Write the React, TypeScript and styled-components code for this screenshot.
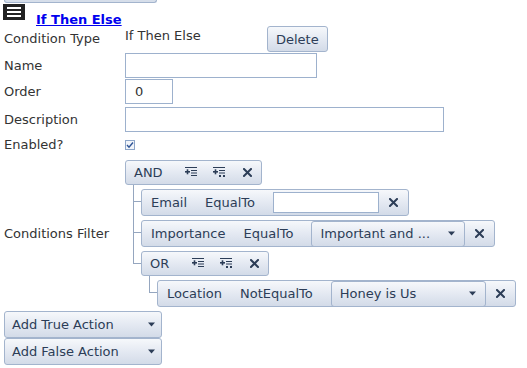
import React from 'react';
import styled, { createGlobalStyle } from 'styled-components';

const GlobalStyle = createGlobalStyle`
    html, body {
        margin: 0;
        padding: 0;
        background: #fff;
    }
    body {
        font-family: "DejaVu Sans", Verdana, sans-serif;
        font-size: 13px;
        color: #333;
    }
`;

const gradient = 'linear-gradient(to bottom, #f6f8fb 0%, #e4e9f2 50%, #d3dbe8 100%)';
const edge = '#a3b4cd';

const Page = styled.div`
    padding: 0 4px;
    width: 519px;
`;

const TopStub = styled.div`
    width: 153px;
    height: 3px;
    background: #d6deea;
    border: 1px solid ${edge};
    border-top: none;
    border-radius: 0 0 3px 3px;
    box-sizing: border-box;
`;

const Header = styled.div`
    display: flex;
    align-items: flex-start;
    height: 22px;
    margin-top: 1px;
    margin-left: -1px;
`;

const MenuButton = styled.div`
    width: 22px;
    height: 16px;
    background: #222;
    display: flex;
    flex-direction: column;
    justify-content: center;
    align-items: center;
    gap: 2px;
    span {
        display: block;
        width: 14px;
        height: 2px;
        background: #fff;
    }
`;

const TitleLink = styled.a`
    margin-left: 11px;
    margin-top: 8px;
    line-height: 16px;
    font-weight: bold;
    color: #0000ee;
    text-decoration: underline;
`;

const FieldRow = styled.div<{ $gap?: number; $height?: number }>`
    display: flex;
    align-items: center;
    margin-top: ${p => p.$gap ?? 0}px;
    min-height: ${p => p.$height ?? 0}px;
`;

const Label = styled.div`
    width: 121px;
    flex-shrink: 0;
    line-height: 16px;
`;

const Value = styled.div`
    align-self: flex-start;
    margin-top: 2px;
    width: 142px;
    line-height: 16px;
`;

const Button = styled.button`
    height: 26px;
    padding: 0 8px;
    font: inherit;
    color: #2c3d57;
    background: ${gradient};
    border: 1px solid ${edge};
    border-radius: 3px;
`;

const TextInput = styled.input<{ $width: number; $height?: number }>`
    box-sizing: border-box;
    width: ${p => p.$width}px;
    height: ${p => p.$height ?? 25}px;
    border: 1px solid #9db1cd;
    padding: 0 9px;
    font: inherit;
    color: #333;
    background: #fff;
    outline: none;
`;

const CheckBox = styled.span`
    display: inline-flex;
    width: 10px;
    height: 10px;
    box-sizing: border-box;
    border: 1px solid #8ea6c9;
    background: #f2f5fa;
    align-items: center;
    justify-content: center;
`;

const Tree = styled.div`
    display: flex;
    flex-direction: column;
    align-items: flex-start;
`;

const GroupBar = styled.div<{ $width: number }>`
    box-sizing: border-box;
    width: ${p => p.$width}px;
    height: 25px;
    display: flex;
    align-items: center;
    padding-left: 8px;
    background: ${gradient};
    border: 1px solid ${edge};
    border-radius: 3px;
    color: #2c3d57;
`;

const GroupName = styled.span`
    margin-right: auto;
`;

const IconCell = styled.span`
    width: 28px;
    height: 100%;
    display: inline-flex;
    align-items: center;
    justify-content: center;
`;

const Children = styled.div`
    display: flex;
    flex-direction: column;
    align-items: flex-start;
    gap: 4px;
    margin-left: 8px;
    padding-top: 4px;
`;

const Branch = styled.div`
    position: relative;
    padding-left: 8px;

    &::before {
        content: '';
        position: absolute;
        left: 0;
        top: -4px;
        width: 8px;
        height: 17px;
        border-left: 1px solid #95a6bf;
        border-bottom: 1px solid #95a6bf;
        box-sizing: border-box;
    }

    &:not(:last-child)::after {
        content: '';
        position: absolute;
        left: 0;
        top: 12px;
        bottom: -4px;
        border-left: 1px solid #95a6bf;
    }
`;

const ConditionRow = styled.div`
    box-sizing: border-box;
    height: 27px;
    display: flex;
    align-items: center;
    padding-left: 9px;
    background: ${gradient};
    border: 1px solid ${edge};
    border-radius: 3px;
    color: #2c3d57;
`;

const Part = styled.span`
    margin-right: 18px;
    white-space: nowrap;
`;

const Select = styled.div<{ $width: number }>`
    box-sizing: border-box;
    width: ${p => p.$width}px;
    height: 26px;
    display: flex;
    align-items: center;
    justify-content: space-between;
    padding: 0 9px 0 8px;
    background: ${gradient};
    border: 1px solid ${edge};
    border-radius: 3px;
    color: #2c3d57;
    white-space: nowrap;
`;

const RemoveCell = styled.span`
    width: 29px;
    display: inline-flex;
    justify-content: center;
`;

const Actions = styled.div`
    display: flex;
    flex-direction: column;
    margin-top: 4px;
`;

const ActionButton = styled(Select)`
    height: 27px;
    padding: 0 6px 0 7px;
`;

const Arrow = () => (
    <svg width="7" height="5" viewBox="0 0 7 5">
        <path d="M0 0.5 H7 L3.5 4.5 Z" fill="#2c3d57" />
    </svg>
);

const Cross = () => (
    <svg width="9" height="9" viewBox="0 0 9 9">
        <path d="M1 1 L8 8 M8 1 L1 8" stroke="#2c3d57" strokeWidth="2" strokeLinecap="square" />
    </svg>
);

const AddConditionIcon = () => (
    <svg width="12" height="11" viewBox="0 0 12 11" fill="#2c3d57">
        <rect x="0" y="0" width="12" height="1" />
        <rect x="0" y="4" width="5" height="1.6" />
        <rect x="1.7" y="2.3" width="1.6" height="5" />
        <rect x="6" y="3" width="6" height="1" />
        <rect x="6" y="5.5" width="6" height="1" />
        <rect x="6" y="8" width="6" height="1" />
    </svg>
);

const AddGroupIcon = () => (
    <svg width="12" height="11" viewBox="0 0 12 11" fill="#2c3d57">
        <rect x="0" y="0" width="12" height="1" />
        <rect x="0" y="4" width="5" height="1.6" />
        <rect x="1.7" y="2.3" width="1.6" height="5" />
        <rect x="6" y="3" width="6" height="1" />
        <rect x="6" y="5.5" width="6" height="1" />
        <rect x="6" y="8" width="2" height="2" />
        <rect x="10" y="8" width="2" height="2" />
    </svg>
);

const Check = () => (
    <svg width="8" height="8" viewBox="0 0 8 8">
        <path d="M1 4 L3 6.2 L7 1.5" stroke="#2f5597" strokeWidth="1.4" fill="none" />
    </svg>
);

const Group: React.FC<{ name: string; width: number; children: React.ReactNode }> = ({ name, width, children }) => (
    <Tree>
        <GroupBar $width={width}>
            <GroupName>{name}</GroupName>
            <IconCell><AddConditionIcon /></IconCell>
            <IconCell><AddGroupIcon /></IconCell>
            <IconCell><Cross /></IconCell>
        </GroupBar>
        <Children>{children}</Children>
    </Tree>
);

const App: React.FC = () => {
    return (
        <Page>
            <GlobalStyle />
            <TopStub />
            <Header>
                <MenuButton><span /><span /><span /></MenuButton>
                <TitleLink href="#">If Then Else</TitleLink>
            </Header>

            <FieldRow $height={26}>
                <Label>Condition Type</Label>
                <Value>If Then Else</Value>
                <Button>Delete</Button>
            </FieldRow>
            <FieldRow $gap={1} $height={25}>
                <Label>Name</Label>
                <TextInput $width={192} />
            </FieldRow>
            <FieldRow $gap={1} $height={25}>
                <Label>Order</Label>
                <TextInput $width={48} defaultValue="0" />
            </FieldRow>
            <FieldRow $gap={3} $height={24}>
                <Label>Description</Label>
                <TextInput $width={319} $height={25} />
            </FieldRow>
            <FieldRow $gap={2} $height={22}>
                <Label>Enabled?</Label>
                <CheckBox><Check /></CheckBox>
            </FieldRow>
            <FieldRow $gap={4}>
                <Label>Conditions Filter</Label>
                <Group name="AND" width={137}>
                    <Branch>
                        <ConditionRow>
                            <Part>Email</Part>
                            <Part>EqualTo</Part>
                            <TextInput $width={106} $height={21} />
                            <RemoveCell><Cross /></RemoveCell>
                        </ConditionRow>
                    </Branch>
                    <Branch>
                        <ConditionRow>
                            <Part>Importance</Part>
                            <Part>EqualTo</Part>
                            <Select $width={154}>Important and ...<Arrow /></Select>
                            <RemoveCell><Cross /></RemoveCell>
                        </ConditionRow>
                    </Branch>
                    <Branch>
                        <Group name="OR" width={128}>
                            <Branch>
                                <ConditionRow>
                                    <Part>Location</Part>
                                    <Part>NotEqualTo</Part>
                                    <Select $width={155}>Honey is Us<Arrow /></Select>
                                    <RemoveCell><Cross /></RemoveCell>
                                </ConditionRow>
                            </Branch>
                        </Group>
                    </Branch>
                </Group>
            </FieldRow>

            <Actions>
                <ActionButton $width={158}>Add True Action<Arrow /></ActionButton>
                <ActionButton $width={158}>Add False Action<Arrow /></ActionButton>
            </Actions>
        </Page>
    );
};

export default App;
